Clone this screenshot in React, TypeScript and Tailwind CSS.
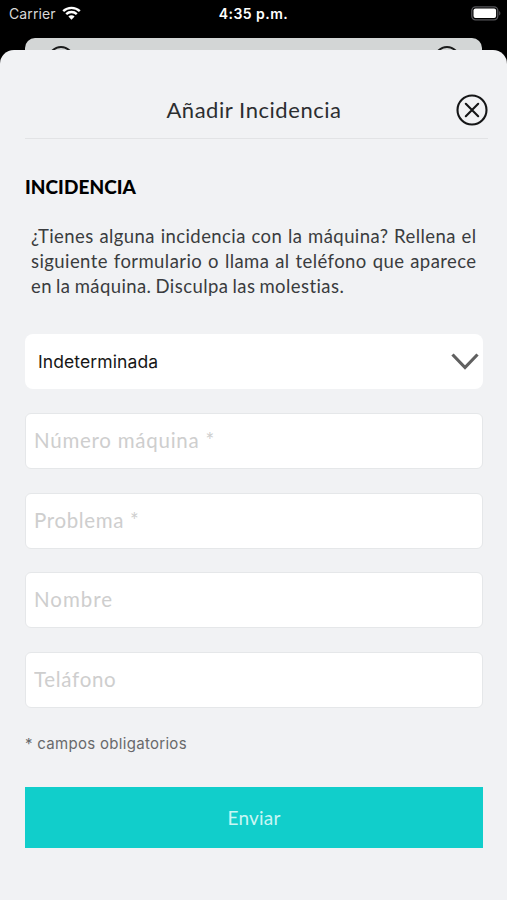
import { useState } from "react";

const fields = [
    { name: "machine", placeholder: "Número máquina *", spacing: "tracking-[0.75px]" },
    { name: "problem", placeholder: "Problema *", spacing: "tracking-[0.65px]" },
    { name: "name", placeholder: "Nombre", spacing: "tracking-[1px]" },
    { name: "phone", placeholder: "Teláfono", spacing: "tracking-[0.7px]" },
];

function StatusBar() {
    return (
        <div className="grid h-[38px] grid-cols-3 items-start pl-[9px] pr-[6px] pt-[5px] font-['Inter',sans-serif] text-white">
            <div className="flex items-center gap-[6px]">
                <span className="text-[14px] leading-[18px] tracking-[0.1px] text-[#d8d8d8]">
                    Carrier
                </span>
                <svg
                    className="mt-[-2px]"
                    width="19"
                    height="14"
                    viewBox="0 0 19 14"
                    fill="none">
                    <path
                        d="M1.2 5.2a12 12 0 0 1 16.6 0M4.2 8.2a7.6 7.6 0 0 1 10.6 0"
                        stroke="white"
                        strokeWidth="2.4"
                    />
                    <path
                        d="M9.5 13.8 6.4 10.6a4.4 4.4 0 0 1 6.2 0Z"
                        fill="white"
                    />
                </svg>
            </div>
            <span className="ml-[-3px] text-center text-[14px] font-semibold leading-[18px] tracking-[0.45px]">
                4:35 p.m.
            </span>
            <svg
                className="mt-px justify-self-end"
                width="30"
                height="15"
                viewBox="0 0 30 15"
                fill="none">
                <rect
                    x="0.8"
                    y="0.8"
                    width="26"
                    height="13"
                    rx="3.8"
                    stroke="#56565a"
                    strokeWidth="1.3"
                />
                <rect x="2.5" y="2.5" width="22.6" height="9.6" rx="2" fill="white" />
                <path d="M28.2 5v4.6c1.6-.7 1.6-3.9 0-4.6Z" fill="#56565a" />
            </svg>
        </div>
    );
}

// Top edge of the screen that stays behind the modal
function BackCard() {
    return (
        <div className="mx-[25px] flex h-[12px] justify-between overflow-hidden rounded-t-[10px] bg-[#d3d6d6] pl-[23px] pr-[22px] pt-[8px]">
            <div className="size-[26px] shrink-0 rounded-full border-2 border-[#1b1c1c]" />
            <div className="size-[26px] shrink-0 rounded-full border-2 border-[#1b1c1c]" />
        </div>
    );
}

export default function App() {
    const [values, setValues] = useState<Record<string, string>>({});

    return (
        <div className="flex h-[900px] w-[507px] flex-col overflow-hidden bg-black font-['Lato',sans-serif]">
            <StatusBar />
            <BackCard />

            <main className="flex-1 rounded-t-[14px] bg-[#f1f2f4] pl-[25px] pr-[24px]">
                {/* Header */}
                <header className="mr-[-5px] grid h-[89px] grid-cols-[1fr_auto_1fr] items-center border-b border-[#e2e3e5] pt-[32px]">
                    <h1 className="col-start-2 ml-[-5px] text-[22px] leading-[30px] tracking-[0.55px] text-[#2c2e30]">
                        Añadir Incidencia
                    </h1>
                    <button className="justify-self-end" aria-label="Cerrar">
                        <svg
                            width="32"
                            height="32"
                            viewBox="0 0 32 32"
                            fill="none"
                            stroke="#151617"
                            strokeWidth="2.1">
                            <circle cx="16" cy="16" r="14.5" />
                            <path
                                d="m9.8 9.8 12.4 12.4M22.2 9.8 9.8 22.2"
                                strokeLinecap="round"
                            />
                        </svg>
                    </button>
                </header>

                <h2 className="mt-[35px] text-[19px] font-black leading-[26px] tracking-[0.05px] text-black">
                    INCIDENCIA
                </h2>
                <p className="ml-[6px] mt-[24px] w-[445.5px] text-[18.5px] leading-[25px] tracking-[0.42px] [word-spacing:-1px] text-[#3a3c3e]">
                    <span className="block whitespace-nowrap [text-align-last:justify]">
                        ¿Tienes alguna incidencia con la máquina? Rellena el
                    </span>
                    <span className="block whitespace-nowrap [text-align-last:justify]">
                        siguiente formulario o llama al teléfono que aparece
                    </span>
                    <span className="block whitespace-nowrap">
                        en la máquina. Disculpa las molestias.
                    </span>
                </p>

                {/* Form */}
                <form onSubmit={(e) => e.preventDefault()}>
                    <button
                        type="button"
                        className="mt-[35px] flex h-[55px] w-full items-center justify-between rounded-[8px] bg-white pl-[13px] pr-[4px] font-['Inter',sans-serif] text-[17.5px] tracking-[0.1px] text-[#161616]">
                        <span className="pt-[2px]">Indeterminada</span>
                        <svg
                            width="28"
                            height="18"
                            viewBox="0 0 28 18"
                            fill="none"
                            stroke="#606060"
                            strokeWidth="3.2">
                            <path d="m1.5 1.5 12.5 13 12.5-13" />
                        </svg>
                    </button>

                    <div className="mt-[24px] flex flex-col gap-[23.5px]">
                        {fields.map(({ name, placeholder, spacing }) => (
                            <input
                                key={name}
                                value={values[name] ?? ""}
                                onChange={(e) =>
                                    setValues({ ...values, [name]: e.target.value })
                                }
                                placeholder={placeholder}
                                className={`h-[56px] w-full rounded-[6px] border border-[#e5e7e9] bg-white px-[8px] pb-[2px] text-[20.5px] text-[#222426] outline-none placeholder:text-[#cecece] ${spacing}`}
                            />
                        ))}
                    </div>

                    <p className="mt-[25px] font-['Inter',sans-serif] text-[15px] leading-[22px] tracking-[0.3px] text-[#68696b]">
                        * campos obligatorios
                    </p>
                    <button
                        type="submit"
                        className="mt-[32px] h-[61px] w-full bg-[#11cecb] pt-[2px] text-[19px] tracking-[0.2px] text-[#c9f6f4]">
                        Enviar
                    </button>
                </form>
            </main>
        </div>
    );
}
